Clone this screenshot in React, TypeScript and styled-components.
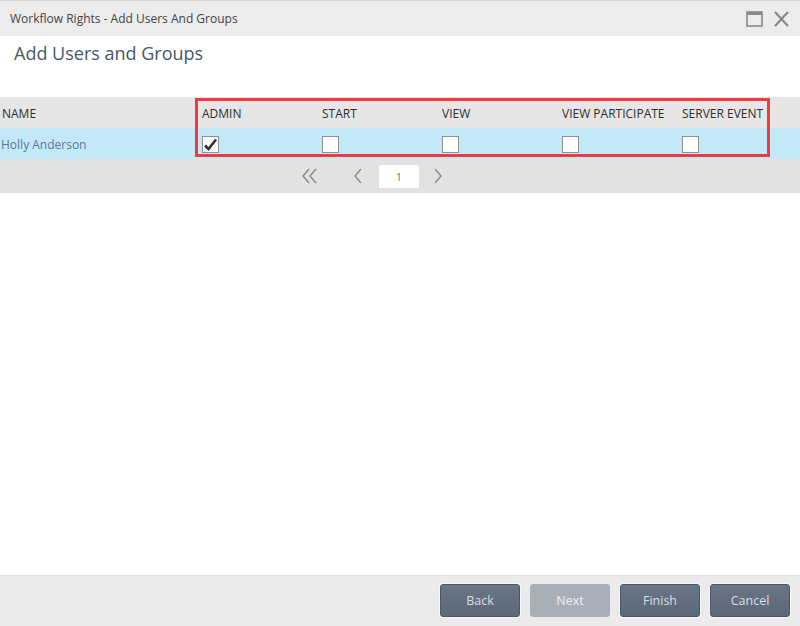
import React from "react";
import styled, { createGlobalStyle } from "styled-components";

const GlobalStyle = createGlobalStyle`
  html, body { margin: 0; padding: 0; }
  body {
    font-family: "Open Sans", "Noto Sans", sans-serif;
    background: #ffffff;
  }
`;

const Dialog = styled.div`
  width: 800px;
  height: 626px;
  display: flex;
  flex-direction: column;
  background: #fff;
  overflow: hidden;
`;

const TitleBar = styled.div`
  height: 36px;
  box-sizing: border-box;
  border-top: 1px solid #d4d4d4;
  background: #ececec;
  display: flex;
  align-items: center;
  padding: 0 10px 0 10px;
`;

const TitleText = styled.div`
  flex: 1;
  font-size: 12px;
  color: #444;
`;

const TitleButtons = styled.div`
  display: flex;
  align-items: center;
  gap: 10px;
`;

const Heading = styled.h1`
  margin: 0;
  padding: 5px 14px 0;
  height: 61px;
  box-sizing: border-box;
  font-size: 18px;
  font-weight: 400;
  color: #485768;
`;

const Grid = styled.div`
  position: relative;
`;

const Row = styled.div<{ $bg: string; $h: number }>`
  display: grid;
  grid-template-columns: 196px repeat(5, 120px);
  height: ${(p) => p.$h}px;
  box-sizing: border-box;
  padding-top: 1px;
  background: ${(p) => p.$bg};
  align-items: center;
`;

const HeadCell = styled.div<{ $first?: boolean }>`
  padding-left: ${(p) => (p.$first ? 2 : 6)}px;
  font-size: 12px;
  color: #2e2e2e;
  white-space: nowrap;
`;

const NameCell = styled.div`
  padding-left: 1px;
  font-size: 12px;
  color: #5b7896;
`;

const BoxCell = styled.div`
  padding-left: 6px;
  display: flex;
  align-items: center;
`;

const Check = styled.div`
  width: 17px;
  height: 17px;
  box-sizing: border-box;
  border: 1px solid #8f8f8f;
  background: #fff;
  display: flex;
  align-items: center;
  justify-content: center;
`;

const Highlight = styled.div`
  position: absolute;
  left: 195px;
  top: 1px;
  width: 575px;
  height: 59px;
  box-sizing: border-box;
  border: 3px solid #ef3a41;
  pointer-events: none;
`;

const Pager = styled.div`
  height: 34px;
  background: #e2e2e2;
  display: flex;
  align-items: center;
  justify-content: center;
`;

const PagerInner = styled.div`
  display: flex;
  align-items: center;
  margin-left: -58px;
`;

const PagerBtn = styled.div<{ $w: number; $gap?: number }>`
  width: ${(p) => p.$w}px;
  height: 24px;
  margin-left: ${(p) => p.$gap ?? 0}px;
  display: flex;
  align-items: center;
  justify-content: center;
`;

const PageInput = styled.div`
  width: 40px;
  height: 23px;
  background: #fff;
  border-radius: 2px;
  display: flex;
  align-items: center;
  justify-content: center;
  font-size: 11px;
  color: #777;
  margin: 0 12px 0 8px;
`;

const Spacer = styled.div`
  flex: 1;
`;

const Footer = styled.div`
  height: 51px;
  box-sizing: border-box;
  background: #ebebeb;
  border-top: 1px solid #e2e2e2;
  display: flex;
  justify-content: flex-end;
  align-items: center;
  gap: 10px;
  padding: 0 10px 1px 0;
`;

const Button = styled.button<{ $disabled?: boolean }>`
  width: 80px;
  height: 33px;
  box-sizing: border-box;
  border: 1px solid ${(p) => (p.$disabled ? "#a9b0b8" : "#4c5766")};
  border-radius: 3px;
  background: ${(p) =>
    p.$disabled ? "#a8afb7" : "linear-gradient(#6a7686, #5c6877)"};
  box-shadow: ${(p) => (p.$disabled ? "none" : "0 0 0 1px #f7f7f7")};
  color: ${(p) => (p.$disabled ? "#eef0f2" : "#d9dee4")};
  font-family: "Open Sans", "Noto Sans", sans-serif;
  font-size: 12.5px;
  padding: 0;
`;

const cols = ["ADMIN", "START", "VIEW", "VIEW PARTICIPATE", "SERVER EVENT"];
const checked = [true, false, false, false, false];

const Tick = () => (
  <svg width="15" height="13" viewBox="0 0 15 13">
    <path d="M2 7.5 L5.5 11 L13 1.5" fill="none" stroke="#333" strokeWidth="2.6" strokeLinejoin="miter" />
  </svg>
);

const Chevron = ({ dir, double }: { dir: "l" | "r"; double?: boolean }) => (
  <svg width={double ? 18 : 10} height="16" viewBox={double ? "0 0 18 16" : "0 0 10 16"}>
    {double ? (
      <g fill="none" stroke="#8a8a8a" strokeWidth="1.4">
        <path d="M8 1 L2 8 L8 15" />
        <path d="M15 1 L9 8 L15 15" />
      </g>
    ) : (
      <path
        d={dir === "l" ? "M8 1 L2 8 L8 15" : "M2 1 L8 8 L2 15"}
        fill="none"
        stroke="#8a8a8a"
        strokeWidth="1.4"
      />
    )}
  </svg>
);

export default function App() {
  return (
    <>
      <GlobalStyle />
      <Dialog>
        <TitleBar>
          <TitleText>Workflow Rights - Add Users And Groups</TitleText>
          <TitleButtons>
            <svg width="17" height="16" viewBox="0 0 17 16">
              <rect x="1" y="1" width="15" height="14" fill="none" stroke="#8a8a8a" strokeWidth="1.6" />
              <rect x="1" y="1" width="15" height="3" fill="#8a8a8a" />
            </svg>
            <svg width="17" height="16" viewBox="0 0 17 16">
              <path d="M2 1 L15 15 M15 1 L2 15" stroke="#8a8a8a" strokeWidth="2.2" />
            </svg>
          </TitleButtons>
        </TitleBar>
        <Heading>Add Users and Groups</Heading>
        <Grid>
          <Row $bg="#e6e6e6" $h={31}>
            <HeadCell $first>NAME</HeadCell>
            {cols.map((c) => (
              <HeadCell key={c}>{c}</HeadCell>
            ))}
          </Row>
          <Row $bg="#c3e9f9" $h={31}>
            <NameCell>Holly Anderson</NameCell>
            {checked.map((v, i) => (
              <BoxCell key={i}>
                <Check>{v && <Tick />}</Check>
              </BoxCell>
            ))}
          </Row>
          <Highlight />
        </Grid>
        <Pager>
          <PagerInner>
            <PagerBtn $w={26}>
              <Chevron dir="l" double />
            </PagerBtn>
            <PagerBtn $w={26} $gap={22}>
              <Chevron dir="l" />
            </PagerBtn>
            <PageInput>1</PageInput>
            <PagerBtn $w={14}>
              <Chevron dir="r" />
            </PagerBtn>
          </PagerInner>
        </Pager>
        <Spacer />
        <Footer>
          <Button>Back</Button>
          <Button $disabled>Next</Button>
          <Button>Finish</Button>
          <Button>Cancel</Button>
        </Footer>
      </Dialog>
    </>
  );
}
